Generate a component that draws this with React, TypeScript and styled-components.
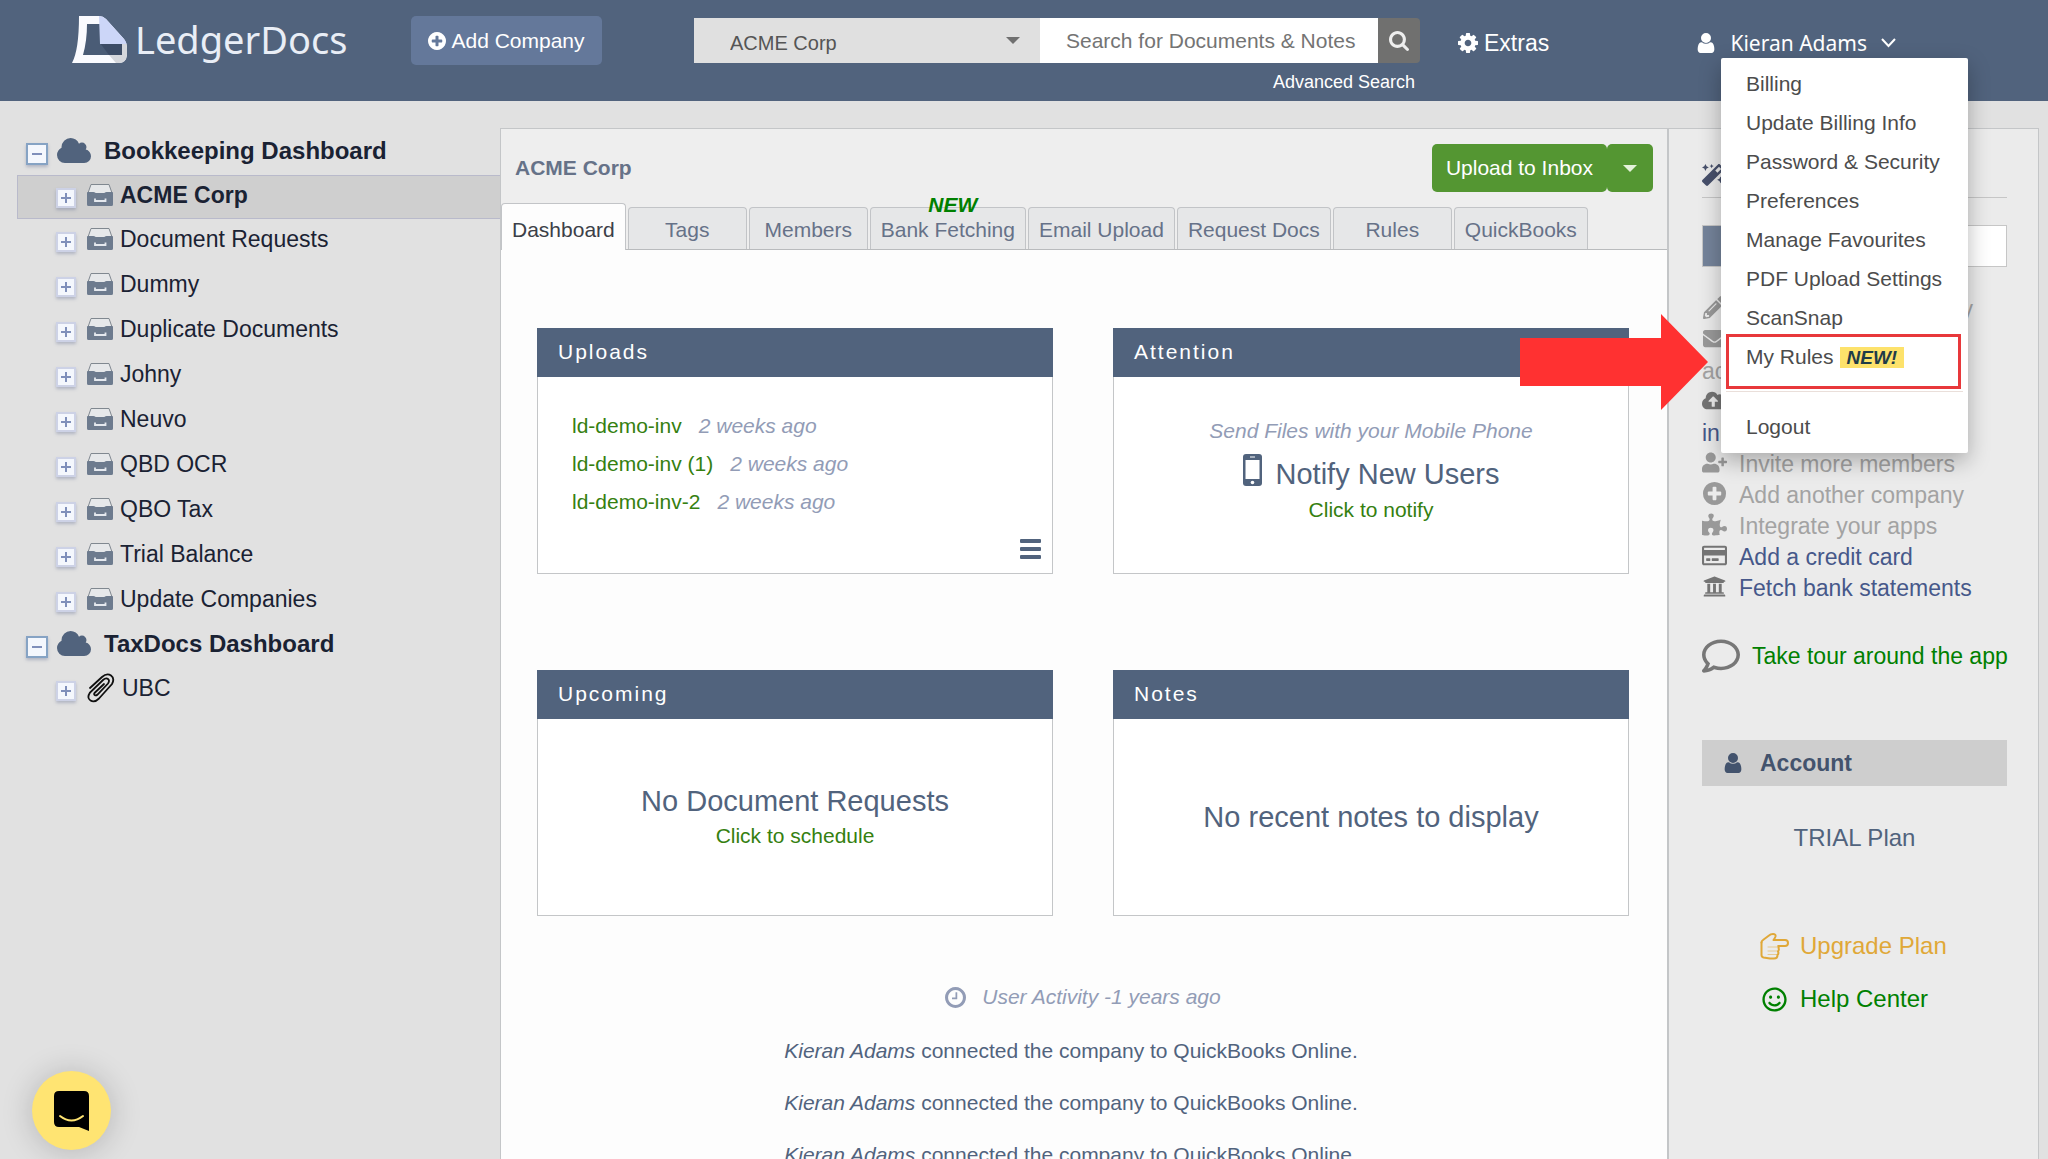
import React from 'react';
import styled, { createGlobalStyle, css } from 'styled-components';
import {
  FaCloudUploadAlt,
  FaEnvelope,
  FaMagic,
  FaPencilAlt,
  FaPuzzlePiece,
  FaRegComment,
  FaRegCreditCard,
  FaRegSmile,
  FaUniversity,
  FaUserPlus,
} from 'react-icons/fa';

const color = {
  navy: '#51637d',
  slate: '#667288',
  page: '#e1e1e1',
  aside: '#ebebeb',
  line: '#c4c6c8',
  green: '#358010',
  pure: '#008000',
  muted: '#929cb6',
  ink: '#1a2233',
  red: '#ff3131',
};

const GlobalStyle = createGlobalStyle`
  *, *::before, *::after { box-sizing: border-box; }
  body {
    margin: 0;
    background: ${color.page};
    color: ${color.navy};
    font-family: "Liberation Sans", Arial, sans-serif;
    font-size: 21px;
    line-height: 30px;
  }
  a { color: inherit; text-decoration: none; }
  button, input, select { font: inherit; color: inherit; border: 0; margin: 0; padding: 0; }
  button { background: none; cursor: pointer; }
  ul { list-style: none; margin: 0; padding: 0; }
  h1, h2, h3, p { margin: 0; font-weight: normal; font-size: inherit; }
`;

/* ---------- icons ---------- */

const paths = {
  user: 'M1536 1399q0 109-62.5 187t-150.5 78h-854q-88 0-150.5-78t-62.5-187q0-85 8.5-160.5t31.5-152 58.5-131 94-89 134.5-34.5q131 128 313 128t313-128q76 0 134.5 34.5t94 89 58.5 131 31.5 152 8.5 160.5zm-256-887q0 159-112.5 271.5t-271.5 112.5-271.5-112.5-112.5-271.5 112.5-271.5 271.5-112.5 271.5 112.5 112.5 271.5z',
  cog: 'M1152 896q0-106-75-181t-181-75-181 75-75 181 75 181 181 75 181-75 75-181zm512-109v222q0 12-8 23t-20 13l-185 28q-19 54-39 91 35 50 107 138 10 12 10 25t-9 23q-27 37-99 108t-94 71q-12 0-26-9l-138-108q-44 23-91 38-16 136-29 186-7 28-36 28h-222q-14 0-24.5-8.5t-11.5-21.5l-28-184q-49-16-90-37l-141 107q-10 9-25 9-14 0-25-11-126-114-165-168-7-10-7-23 0-12 8-23 15-21 51-66.5t54-70.5q-27-50-41-99l-183-27q-13-2-21-12.5t-8-23.5v-222q0-12 8-23t19-13l186-28q14-46 39-92-40-57-107-138-10-12-10-24 0-10 9-23 26-36 98.5-107.5t94.5-71.5q13 0 26 10l138 107q44-23 91-38 16-136 29-186 7-28 36-28h222q14 0 24.5 8.5t11.5 21.5l28 184q49 16 90 37l142-107q9-9 24-9 13 0 25 10 129 119 165 170 7 8 7 22 0 12-8 23-15 21-51 66.5t-54 70.5q26 50 41 98l183 28q13 2 21 12.5t8 23.5z',
  search: 'M1216 832q0-185-131.5-316.5t-316.5-131.5-316.5 131.5-131.5 316.5 131.5 316.5 316.5 131.5 316.5-131.5 131.5-316.5zm512 832q0 52-38 90t-90 38q-54 0-90-38l-343-342q-179 124-399 124-143 0-273.5-55.5t-225-150-150-225-55.5-273.5 55.5-273.5 150-225 225-150 273.5-55.5 273.5 55.5 225 150 150 225 55.5 273.5q0 220-124 399l343 343q37 37 37 90z',
  plus: 'M1344 960v-128q0-26-19-45t-45-19h-256v-256q0-26-19-45t-45-19h-128q-26 0-45 19t-19 45v256h-256q-26 0-45 19t-19 45v128q0 26 19 45t45 19h256v256q0 26 19 45t45 19h128q26 0 45-19t19-45v-256h256q26 0 45-19t19-45zm320-64q0 209-103 385.5t-279.5 279.5-385.5 103-385.5-103-279.5-279.5-103-385.5 103-385.5 279.5-279.5 385.5-103 385.5 103 279.5 279.5 103 385.5z',
  clock: 'M1024 544v448q0 14-9 23t-23 9h-320q-14 0-23-9t-9-23v-64q0-14 9-23t23-9h224v-352q0-14 9-23t23-9h64q14 0 23 9t9 23zm416 352q0-148-73-273t-198-198-273-73-273 73-198 198-73 273 73 273 198 198 273 73 273-73 198-198 73-273zm224 0q0 209-103 385.5t-279.5 279.5-385.5 103-385.5-103-279.5-279.5-103-385.5 103-385.5 279.5-279.5 385.5-103 385.5 103 279.5 279.5 103 385.5z',
};

const Svg = styled.svg`
  display: block;
  flex: none;
`;

const Glyph = ({ name, size }: { name: keyof typeof paths; size: number }) => (
  <Svg
    width={size}
    height={size}
    viewBox={name === 'search' ? '64 128 1664 1664' : '128 128 1536 1536'}
    fill="currentColor"
    aria-hidden
  >
    <path d={paths[name]} />
  </Svg>
);

const CloudIcon = () => (
  <Svg width="34" height="25" viewBox="64 128 1920 1408" preserveAspectRatio="none" fill={color.navy} aria-hidden>
    <path d="M1984 1152q0 159-112.5 271.5t-271.5 112.5h-1088q-185 0-316.5-131.5t-131.5-316.5q0-132 71-241.5t187-163.5q-2-28-2-43 0-212 150-362t362-150q158 0 286.5 88t187.5 230q70-62 166-62 106 0 181 75t75 181q0 75-41 138 129 30 213 134.5t84 239.5z" />
  </Svg>
);

const DrawerIcon = () => (
  <Svg width="26" height="24" viewBox="0 0 26 24" aria-hidden>
    <path d="M1 10 4 1.500h18L25 10" fill="#e6e8ea" stroke="#808890" strokeWidth="1" />
    <path d="M1 9h5.500q1 0 1.500 .5t1.500 .5h7q1 0 1.500-.5t1.500-.5H25q1 0 1 1v11.500q0 1.500-1.500 1.500h-23Q0 23 0 21.500V10q0-1 1-1z" fill="#6d7b8e" />
    <path d="M8 15.500v2.500h10.500v-2.500" fill="none" stroke="#e4e8ee" strokeWidth="1.800" />
  </Svg>
);

const ClipIcon = () => (
  <Svg width="28" height="30" viewBox="0 0 28 30" fill="none" stroke="#101010" strokeWidth="1.800" strokeLinecap="round" aria-hidden>
    <path d="M3 15 15 4q5-4.500 9-1.500t1 8.500L12 25.500q-4.500 4.500-8.500 2T3 19.500L16 7q3-2.500 5-1t0 4.500L10.500 21.500q-1.500 1.500-2.800.500t.300-2.500L17 11" />
  </Svg>
);

const HandIcon = () => (
  <Svg width="29" height="27" viewBox="0 0 29 27" fill="none" stroke="currentColor" strokeWidth="2" strokeLinejoin="round" strokeLinecap="round" aria-hidden>
    <path d="M1.500 9.500Q1.500 8 3 7l6-4.500Q10.500 1 13 1q3 0 2.500 2.500Q15 5 13.500 7H25q3 0 3 3t-3 3h-6.500" />
    <path d="M1.500 9.500V22q0 2 2 2.500l6.500 1h4q3.500 0 3.500-3.500 1.500-1.500 .5-3.500 1.500-2 .5-3.500 .5-1 0-2" />
    <path d="M18 18H8M17.500 21.500H8M18.500 14H8" strokeWidth="1" opacity=".5" />
  </Svg>
);

const Caret = styled.span<{ $tone: string }>`
  width: 0;
  height: 0;
  border: 7px solid transparent;
  border-bottom-width: 0;
  border-top-color: ${(p) => p.$tone};
`;

/* ---------- header ---------- */

const Page = styled.div`
  position: relative;
  display: flex;
  flex-direction: column;
  height: 100vh;
  overflow: hidden;
`;

const Header = styled.header`
  display: flex;
  align-items: flex-start;
  flex: none;
  min-height: 101px;
  padding: 16px 152px 0 72px;
  background: ${color.navy};
  color: #fff;
`;

const Brand = styled.a`
  display: flex;
  align-items: center;
  gap: 8px;
  width: 339px;
  font-family: "Noto Sans", "Open Sans", sans-serif;
  font-size: 38px;
  line-height: 47px;
  color: #e9eef6;
`;

const AddCompany = styled.button`
  display: flex;
  align-items: center;
  justify-content: center;
  gap: 5px;
  width: 191px;
  height: 49px;
  border-radius: 5px;
  background: #64789a;
`;

const SearchArea = styled.form`
  display: flex;
  flex-direction: column;
  align-items: flex-end;
  width: 726px;
  margin: 2px 38px 0 92px;
`;

const SearchBar = styled.div`
  display: flex;
  width: 100%;
  height: 45px;
`;

const SelectWrap = styled.label`
  position: relative;
  display: flex;
  width: 346px;
  ${Caret} {
    position: absolute;
    right: 20px;
    top: 19px;
    pointer-events: none;
  }
`;

const Picker = styled.select`
  width: 100%;
  padding: 4px 40px 0 36px;
  appearance: none;
  border-radius: 0;
  background: #e0e0e0;
  color: #555;
  font-size: 20px;
`;

const SearchInput = styled.input`
  flex: 1;
  min-width: 0;
  padding: 0 10px 0 26px;
  background: #fff;
  color: #555;
  &::placeholder { color: #747474; opacity: 1; }
`;

const SearchButton = styled.button`
  display: flex;
  align-items: center;
  justify-content: center;
  width: 42px;
  border-radius: 0 4px 4px 0;
  background: #70706f;
  color: #eee;
`;

const Advanced = styled.a`
  margin: 4px 5px 0 0;
  font-size: 18px;
`;

const Extras = styled.a`
  display: flex;
  align-items: center;
  gap: 6px;
  margin-top: 12px;
  font-size: 23px;
`;

const UserArea = styled.div`
  position: relative;
  margin: 12px 0 0 auto;
`;

const UserButton = styled.button`
  display: flex;
  align-items: center;
  gap: 14px;
  font-family: "Noto Sans", "Open Sans", sans-serif;
  font-size: 21px;
  line-height: 30px;
`;

const Menu = styled.ul`
  position: absolute;
  z-index: 3;
  top: 30px;
  right: -72px;
  width: 247px;
  padding: 6px 5px 7px;
  border-radius: 2px;
  background: #fff;
  color: #4c4c4c;
  box-shadow: 0 8px 22px rgba(0, 0, 0, 0.28);
`;

const MenuItem = styled.li<{ $marked?: boolean }>`
  position: relative;
  padding-left: 20px;
  line-height: 39px;
  white-space: nowrap;
  ${(p) =>
    p.$marked &&
    css`
      &::after {
        content: "";
        position: absolute;
        inset: -3px 2px -13px 0;
        border: 3px solid #e8383b;
      }
    `}
`;

const MenuRule = styled.li`
  height: 1px;
  margin: 15px 0;
  background: #eadfda;
`;

const NewFlag = styled.em`
  display: inline-block;
  margin-left: 6px;
  padding: 0 7px;
  background: #fde26b;
  color: #1f3c48;
  font-size: 19px;
  font-weight: bold;
  line-height: 21px;
`;

/* ---------- layout ---------- */

const Columns = styled.div`
  display: grid;
  grid-template-columns: 500px minmax(0, 1fr) 371px;
  flex: 1;
  min-height: 0;
  padding-right: 9px;
`;

const Sidebar = styled.nav`
  padding: 30px 0 0 17px;
  color: ${color.ink};
`;

const TreeRow = styled.div<{ $root?: boolean; $active?: boolean }>`
  display: flex;
  align-items: center;
  height: ${(p) => (p.$root || p.$active ? 44 : 45)}px;
  padding: 0 0 5px ${(p) => (p.$root ? 8 : 38)}px;
  border: 1px solid ${(p) => (p.$active ? '#b9bacb' : 'transparent')};
  border-right: 0;
  background: ${(p) => (p.$active ? '#cfcfcf' : 'transparent')};
  font-size: ${(p) => (p.$root ? 24 : 23)}px;
  font-weight: ${(p) => (p.$root || p.$active ? 'bold' : 'normal')};
`;

const Toggle = styled.button<{ $open?: boolean }>`
  position: relative;
  flex: none;
  width: ${(p) => (p.$open ? 22 : 20)}px;
  height: ${(p) => (p.$open ? 22 : 20)}px;
  margin: 6px ${(p) => (p.$open ? 9 : 11)}px 0 0;
  border: 2px solid ${(p) => (p.$open ? '#86a3c4' : '#cdd2e6')};
  background: #f4f7fd;
  box-shadow: 0 2px 3px rgba(90, 100, 140, 0.35);
  &::before, &::after {
    content: "";
    position: absolute;
    top: ${(p) => (p.$open ? 8 : 7)}px;
    left: ${(p) => (p.$open ? 4 : 3)}px;
    width: 10px;
    height: 2px;
    background: #7f8fba;
  }
  &::after {
    display: ${(p) => (p.$open ? 'none' : 'block')};
    top: 3px;
    left: 7px;
    width: 2px;
    height: 10px;
  }
`;

const TreeLink = styled.a<{ $root?: boolean }>`
  display: flex;
  align-items: center;
  gap: ${(p) => (p.$root ? 13 : 7)}px;
`;

const Main = styled.main`
  display: flex;
  flex-direction: column;
  min-width: 0;
  margin-top: 27px;
  border: 1px solid ${color.line};
  border-bottom: 0;
  background: #eee;
`;

const TitleBar = styled.div`
  display: flex;
  align-items: center;
  justify-content: space-between;
  padding: 15px 14px 11px;
`;

const Title = styled.h1`
  font-size: 21px;
  font-weight: bold;
  color: ${color.slate};
`;

const Split = styled.div`
  display: flex;
`;

const Upload = styled.button`
  display: flex;
  align-items: center;
  justify-content: center;
  height: 48px;
  padding: 0 14px;
  border-radius: 5px;
  background: #549632;
  color: #fff;
`;

const UploadMore = styled(Upload)`
  width: 46px;
`;

const Tabs = styled.div`
  display: flex;
  align-items: flex-end;
  gap: 2px;
  border-bottom: 1px solid #b9bbbd;
`;

const Tab = styled.button<{ $active?: boolean }>`
  position: relative;
  min-width: 119px;
  height: ${(p) => (p.$active ? 47 : 42)}px;
  margin-bottom: ${(p) => (p.$active ? -1 : 0)}px;
  padding: ${(p) => (p.$active ? 6 : 2)}px 10px 0;
  border: 1px solid #c2c4c7;
  border-bottom: 0;
  border-radius: 4px 4px 0 0;
  background: ${(p) => (p.$active ? '#fdfdfd' : '#e6e7e8')};
  color: ${(p) => (p.$active ? '#3c3f48' : color.slate)};
  white-space: nowrap;
`;

const TabFlag = styled.em`
  position: absolute;
  top: -13px;
  left: 10px;
  right: 0;
  text-align: center;
  color: ${color.pure};
  font-weight: bold;
  line-height: 20px;
`;

const Panel = styled.div`
  flex: 1;
  padding: 78px 38px 0 36px;
  background: #fdfdfd;
`;

const Cards = styled.div`
  display: grid;
  grid-template-columns: 1fr 1fr;
  gap: 96px 60px;
`;

const Card = styled.section`
  display: flex;
  flex-direction: column;
  min-height: 246px;
  border: 1px solid ${color.line};
  border-top: 0;
  background: #fff;
`;

const CardTitle = styled.h2`
  margin: 0 -1px;
  padding: 0 21px 1px;
  background: ${color.navy};
  color: #fff;
  letter-spacing: 2px;
  line-height: 48px;
`;

const CardBody = styled.div`
  display: flex;
  flex: 1;
  flex-direction: column;
  align-items: center;
  justify-content: center;
`;

const FileList = styled.ul`
  flex: 1;
  align-self: stretch;
  padding: 30px 0 0 34px;
  line-height: 38px;
`;

const FileLink = styled.a`
  margin-right: 17px;
  color: ${color.green};
`;

const Soft = styled.em`
  color: ${color.muted};
`;

const Hint = styled.p`
  padding-bottom: 8px;
  margin-top: -8px;
`;

const MoreButton = styled.button`
  display: flex;
  flex-direction: column;
  align-self: flex-end;
  gap: 4px;
  width: 21px;
  margin: 0 11px 14px 0;
  span {
    height: 4px;
    border-radius: 1px;
    background: ${color.navy};
  }
`;

const Big = styled.h3`
  display: flex;
  align-items: center;
  gap: 14px;
  font-size: 29px;
  line-height: 38px;
  svg { margin-bottom: 8px; }
`;

const Action = styled.a`
  color: ${color.green};
  line-height: 32px;
`;

const Activity = styled.section`
  display: flex;
  flex-direction: column;
  align-items: center;
  padding-top: 66px;
`;

const ActivityTitle = styled.h2`
  display: flex;
  align-items: center;
  gap: 16px;
  color: ${color.muted};
`;

const Feed = styled.ul`
  padding: 13px 24px 0 0;
  line-height: 52px;
  white-space: nowrap;
`;

const Aside = styled.aside`
  margin-top: 27px;
  padding: 23px 31px 0 33px;
  border: 1px solid ${color.line};
  border-bottom: 0;
  background: ${color.aside};
  font-size: 23px;
`;

const AsideTitle = styled.h2`
  display: flex;
  align-items: center;
  gap: 14px;
  height: 46px;
  border-bottom: 1px solid #c6c6c6;
  color: #47506b;
`;

const Meter = styled.div`
  height: 42px;
  margin: 27px 0;
  border: 1px solid #c6c6c6;
  background: #fff;
  &::before {
    content: "";
    display: block;
    width: 25%;
    height: 100%;
    background: #74839a;
  }
`;

const Steps = styled.ul`
  line-height: 31px;
  white-space: pre-line;
`;

const Step = styled.li<{ $open?: boolean }>`
  color: ${(p) => (p.$open ? '#46588a' : '#a3a3a3')};
  svg {
    display: inline-block;
    vertical-align: -2px;
    width: 25px;
    height: 23px;
    margin-right: 12px;
    color: ${(p) => (p.$open ? '#747474' : '#999')};
  }
`;

const Tour = styled.a`
  display: flex;
  align-items: center;
  gap: 12px;
  margin: 32px 0 64px;
  color: ${color.pure};
  white-space: nowrap;
  line-height: 40px;
  svg { flex: none; color: #777; }
`;

const AccountBar = styled.h2`
  display: flex;
  align-items: center;
  gap: 17px;
  padding-left: 21px;
  background: #cecece;
  color: #43536d;
  font-weight: bold;
  line-height: 46px;
`;

const Plan = styled.p`
  margin-top: 32px;
  text-align: center;
  font-size: 24px;
  line-height: 40px;
`;

const PlanLinks = styled.div`
  display: flex;
  flex-direction: column;
  gap: 13px;
  margin: 68px 0 0 58px;
`;

const PlanLink = styled.a<{ $tone: string }>`
  display: flex;
  align-items: center;
  gap: 11px;
  color: ${(p) => p.$tone};
  font-size: 24px;
  line-height: 40px;
  svg { width: 29px; }
`;

const Pointer = styled.svg`
  position: absolute;
  z-index: 4;
  top: 314px;
  right: 340px;
`;

const ChatButton = styled.button`
  position: absolute;
  left: 32px;
  bottom: 9px;
  display: flex;
  align-items: center;
  justify-content: center;
  width: 79px;
  height: 79px;
  border-radius: 50%;
  background: #ffe472;
  box-shadow: 0 2px 32px rgba(0, 0, 0, 0.2);
`;

/* ---------- content ---------- */

const companies = ['ACME Corp', 'Document Requests', 'Dummy', 'Duplicate Documents', 'Johny', 'Neuvo', 'QBD OCR', 'QBO Tax', 'Trial Balance', 'Update Companies'];
const tabs = ['Dashboard', 'Tags', 'Members', 'Bank Fetching', 'Email Upload', 'Request Docs', 'Rules', 'QuickBooks'];
const menu = ['Billing', 'Update Billing Info', 'Password & Security', 'Preferences', 'Manage Favourites', 'PDF Upload Settings', 'ScanSnap', 'My Rules'];
const files = ['ld-demo-inv', 'ld-demo-inv (1)', 'ld-demo-inv-2'];
const steps = [
  { icon: <FaPencilAlt />, label: 'Set up a new company' },
  { icon: <FaEnvelope />, label: 'Invite an outside\naccountant' },
  { icon: <FaCloudUploadAlt />, label: 'Upload a file to the\ninbox', open: true },
  { icon: <FaUserPlus />, label: 'Invite more members' },
  { icon: <Glyph name="plus" size={22} />, label: 'Add another company' },
  { icon: <FaPuzzlePiece />, label: 'Integrate your apps' },
  { icon: <FaRegCreditCard />, label: 'Add a credit card', open: true },
  { icon: <FaUniversity />, label: 'Fetch bank statements', open: true },
];

const Folder = ({ label, root, active, icon }: { label: string; root?: boolean; active?: boolean; icon: React.ReactNode }) => (
  <TreeRow $root={root} $active={active}>
    <Toggle $open={root} aria-label={`${root ? 'Collapse' : 'Expand'} ${label}`} />
    <TreeLink href="#" $root={root}>
      {icon}
      {label}
    </TreeLink>
  </TreeRow>
);

const TopBar = () => (
  <Header>
    <Brand href="#">
      <Svg width="55" height="47" viewBox="0 0 55 47" aria-hidden>
        <path d="M7 0h20q4 0 7 3l18 20q3 4 3 8v8q-1 8-8 8H0Q7 34 7 0z" fill="#fafbff" />
        <path d="M15 8h13v19h22v12H11q4-14 4-31z" fill="#4a5c76" />
        <path d="M28 27h23v12H37z" fill="#3c4c66" />
        <path d="M27 0q4 0 7 3l18 20q2 2 2.500 5H28z" fill="#ccd6f8" />
        <path d="M37 39h13v-11h4.500q.5 2 .5 5v6q-1 8-8 8h-3z" fill="#d5d7dc" />
      </Svg>
      LedgerDocs
    </Brand>
    <AddCompany>
      <Glyph name="plus" size={18} />
      Add Company
    </AddCompany>
    <SearchArea>
      <SearchBar>
        <SelectWrap>
          <Picker aria-label="Company">
            <option>ACME Corp</option>
          </Picker>
          <Caret $tone="#707070" />
        </SelectWrap>
        <SearchInput aria-label="Search" placeholder="Search for Documents & Notes" />
        <SearchButton type="button" aria-label="Search">
          <Glyph name="search" size={20} />
        </SearchButton>
      </SearchBar>
      <Advanced href="#">Advanced Search</Advanced>
    </SearchArea>
    <Extras href="#">
      <Glyph name="cog" size={20} />
      Extras
    </Extras>
    <UserArea>
      <UserButton aria-expanded="true">
        <Glyph name="user" size={20} />
        Kieran Adams
        <Svg width="15" height="10" viewBox="0 0 15 10" fill="none" stroke="currentColor" strokeWidth="2" aria-hidden>
          <path d="m1 1 6.500 7L14 1" />
        </Svg>
      </UserButton>
      <Menu>
        {menu.map((label) => (
          <MenuItem key={label} $marked={label === 'My Rules'}>
            <a href="#">{label}</a>
            {label === 'My Rules' && <NewFlag>NEW!</NewFlag>}
          </MenuItem>
        ))}
        <MenuRule role="separator" />
        <MenuItem>
          <a href="#">Logout</a>
        </MenuItem>
      </Menu>
    </UserArea>
  </Header>
);

export default function App() {
  return (
    <Page>
      <GlobalStyle />
      <TopBar />
      <Columns>
        <Sidebar>
          <Folder root label="Bookkeeping Dashboard" icon={<CloudIcon />} />
          {companies.map((name, i) => (
            <Folder key={name} label={name} active={i === 0} icon={<DrawerIcon />} />
          ))}
          <Folder root label="TaxDocs Dashboard" icon={<CloudIcon />} />
          <Folder label="UBC" icon={<ClipIcon />} />
        </Sidebar>

        <Main>
          <TitleBar>
            <Title>ACME Corp</Title>
            <Split>
              <Upload>Upload to Inbox</Upload>
              <UploadMore aria-label="More upload options">
                <Caret $tone="#e4f2da" />
              </UploadMore>
            </Split>
          </TitleBar>
          <Tabs role="tablist">
            {tabs.map((name, i) => (
              <Tab key={name} role="tab" $active={i === 0} aria-selected={i === 0}>
                {name}
                {name === 'Bank Fetching' && <TabFlag>NEW</TabFlag>}
              </Tab>
            ))}
          </Tabs>
          <Panel>
            <Cards>
              <Card>
                <CardTitle>Uploads</CardTitle>
                <CardBody>
                  <FileList>
                    {files.map((file) => (
                      <li key={file}>
                        <FileLink href="#">{file}</FileLink>
                        <Soft>2 weeks ago</Soft>
                      </li>
                    ))}
                  </FileList>
                  <MoreButton aria-label="All uploads">
                    <span />
                    <span />
                    <span />
                  </MoreButton>
                </CardBody>
              </Card>
              <Card>
                <CardTitle>Attention</CardTitle>
                <CardBody>
                  <Hint>
                    <Soft>Send Files with your Mobile Phone</Soft>
                  </Hint>
                  <Big>
                    <Svg width="19" height="32" viewBox="0 0 19 32" fill="none" aria-hidden>
                      <rect width="19" height="32" rx="3" fill={color.navy} />
                      <path d="M2.500 6h14v19h-14z" fill="#fff" />
                      <path d="M7 3h5" stroke="#fff" />
                      <circle cx="9.500" cy="28.500" r="1.800" fill="#fff" />
                    </Svg>
                    Notify New Users
                  </Big>
                  <Action href="#">Click to notify</Action>
                </CardBody>
              </Card>
              <Card>
                <CardTitle>Upcoming</CardTitle>
                <CardBody>
                  <Big>No Document Requests</Big>
                  <Action href="#">Click to schedule</Action>
                </CardBody>
              </Card>
              <Card>
                <CardTitle>Notes</CardTitle>
                <CardBody>
                  <Big>No recent notes to display</Big>
                </CardBody>
              </Card>
            </Cards>
            <Activity>
              <ActivityTitle>
                <Glyph name="clock" size={21} />
                <em>User Activity -1 years ago</em>
              </ActivityTitle>
              <Feed>
                {[1, 2, 3].map((n) => (
                  <li key={n}>
                    <em>Kieran Adams</em> connected the company to QuickBooks Online.
                  </li>
                ))}
              </Feed>
            </Activity>
          </Panel>
        </Main>

        <Aside>
          <AsideTitle>
            <FaMagic size={22} />
            Get Started
          </AsideTitle>
          <Meter />
          <Steps>
            {steps.map((s) => (
              <Step key={s.label} $open={s.open}>
                {s.icon}
                <a href="#">{s.label}</a>
              </Step>
            ))}
          </Steps>
          <Tour href="#">
            <FaRegComment size={38} />
            Take tour around the app
          </Tour>
          <AccountBar>
            <Glyph name="user" size={20} />
            Account
          </AccountBar>
          <Plan>TRIAL Plan</Plan>
          <PlanLinks>
            <PlanLink href="#" $tone="#e0a838">
              <HandIcon />
              Upgrade Plan
            </PlanLink>
            <PlanLink href="#" $tone={color.pure}>
              <FaRegSmile size={25} />
              Help Center
            </PlanLink>
          </PlanLinks>
        </Aside>
      </Columns>

      <Pointer width="188" height="96" viewBox="0 0 188 96" aria-hidden>
        <path d="M0 24h141V0l47 48-47 48V72H0z" fill={color.red} />
      </Pointer>
      <ChatButton aria-label="Open chat">
        <Svg width="35" height="40" viewBox="0 0 35 40" aria-hidden>
          <path d="M5 0h25q5 0 5 5v35l-10-4H5q-5 0-5-5V5q0-5 5-5z" fill="#000" />
          <path d="M6 25q11.500 9 23 0" fill="none" stroke="#ffe472" strokeWidth="2" strokeLinecap="round" />
        </Svg>
      </ChatButton>
    </Page>
  );
}
